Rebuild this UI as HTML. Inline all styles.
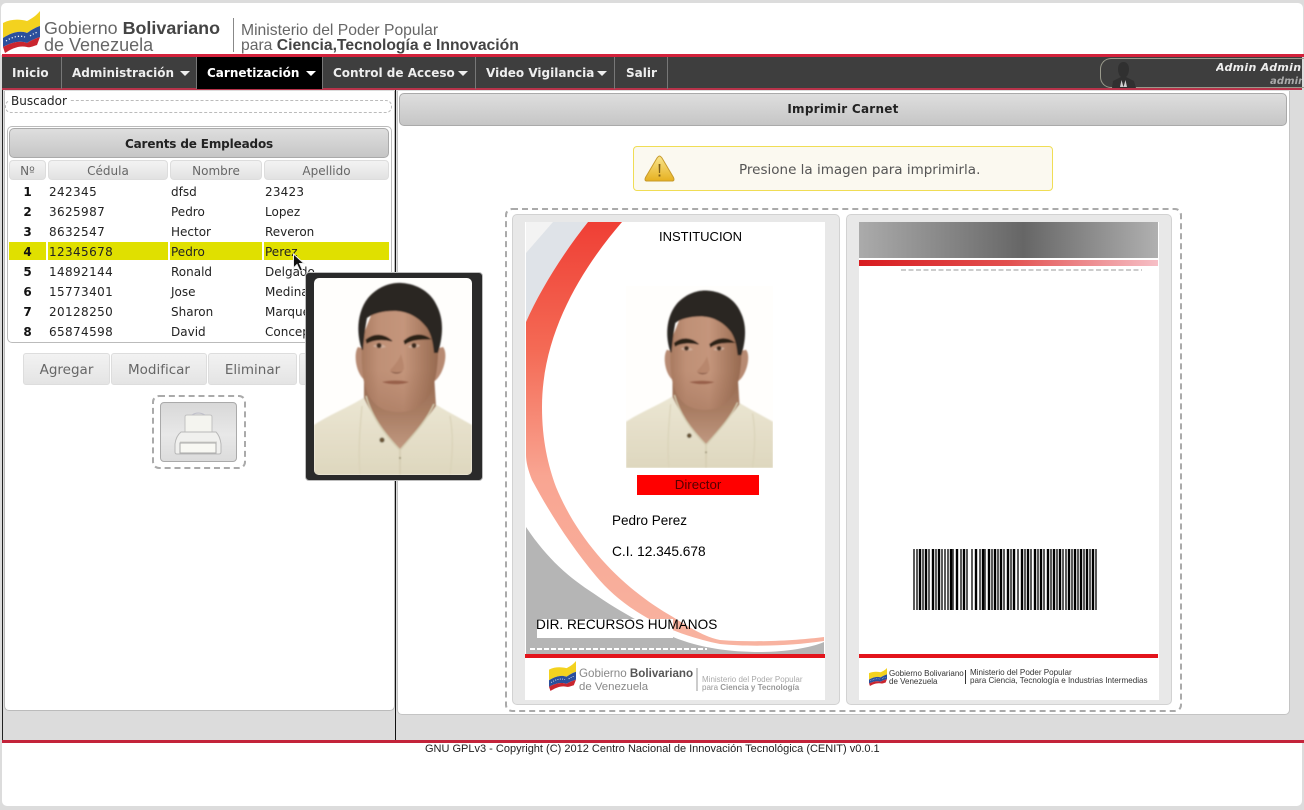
<!DOCTYPE html>
<html lang="es"><head><meta charset="utf-8"><title>Imprimir Carnet</title>
<style>
*{box-sizing:border-box}
html,body{margin:0;padding:0;width:1304px;height:810px;overflow:hidden;background:#dcdcdc}
body{position:relative;font-family:"DejaVu Sans",sans-serif;color:#222}
.a{position:absolute;white-space:nowrap}
.ls{font-family:"Liberation Sans",sans-serif}
.nav{position:absolute;top:57px;height:32px;line-height:32px;color:#eee;font-size:12px;font-weight:bold;text-align:left;border-right:1px solid #777}
.nav i{position:absolute;top:14px;width:0;height:0;border:5px solid transparent;border-top:5px solid #eee;border-bottom:0}
.th{position:absolute;top:160px;height:20px;line-height:21px;text-align:center;font-size:12px;color:#666;border:1px solid #ddd;border-radius:4px;background:linear-gradient(#f3f3f3,#e2e2e2)}
.tr{position:absolute;left:0;width:400px;height:20px;line-height:20px;font-size:12px;color:#222}
.tr span{position:absolute;top:0;white-space:nowrap}
.tr b{position:absolute;left:9px;width:37px;text-align:center;color:#111}
.c1{left:49px;letter-spacing:.38px}.c2{left:171px}.c3{left:265px}
.hl{position:absolute;top:242px;height:18px;background:#e0e000}
.btn{position:absolute;top:353px;height:32px;line-height:32px;text-align:center;font-size:13.5px;color:#666;border:1px solid #ddd;border-radius:3px;background:linear-gradient(#f2f2f2,#e4e4e4)}
.bar{position:absolute;border:1px solid #aaa;border-radius:5px;background:linear-gradient(#dedede,#c6c6c6);font-weight:bold;font-size:12px;color:#222;text-align:center}
</style></head><body>
<svg width="0" height="0" style="position:absolute">
<defs>
<linearGradient id="sk" x1="0" x2="1" y1="0" y2="0"><stop offset="0" stop-color="#a87a60"/><stop offset=".22" stop-color="#bf9076"/><stop offset=".55" stop-color="#c4957b"/><stop offset="1" stop-color="#96694f"/></linearGradient>
<linearGradient id="jaw" x1="0" x2="0" y1="0" y2="1"><stop offset="0" stop-color="#8a5c44" stop-opacity="0"/><stop offset=".6" stop-color="#8a5c44" stop-opacity="0"/><stop offset="1" stop-color="#8a5c44" stop-opacity=".3"/></linearGradient>
<linearGradient id="nk" x1="0" x2="0" y1="0" y2="1"><stop offset="0" stop-color="#946850"/><stop offset=".5" stop-color="#a87c62"/><stop offset="1" stop-color="#c09880"/></linearGradient>
<linearGradient id="shirt" x1="0" x2="0" y1="0" y2="1"><stop offset="0" stop-color="#ebe6d3"/><stop offset="1" stop-color="#ded7be"/></linearGradient>
<filter id="bl"><feGaussianBlur stdDeviation=".9"/></filter>
<linearGradient id="rd" x1="0" x2="0" y1="0" y2="1"><stop offset="0" stop-color="#ef3f35"/><stop offset=".3" stop-color="#f46a55"/><stop offset=".6" stop-color="#f9a592"/><stop offset="1" stop-color="#f8b3a0"/></linearGradient>
<symbol id="face" viewBox="0 0 158 197" preserveAspectRatio="none">
<rect width="158" height="197" fill="#fffefc"/>
<g filter="url(#bl)">
<path d="M0 147 C18 135 38 128 52 118 L118 124 C130 132 146 140 158 147 V197 H0Z" fill="url(#shirt)"/>
<path d="M50 100 L50 120 C60 142 74 158 86 171 C98 158 112 142 122 128 L120 96Z" fill="url(#nk)"/>
<path d="M44 69 C39 76 42 97 52 103 L54 72Z M129 69 C135 76 129 99 119 104 L117 72Z" fill="#b78a72"/>
<path d="M48 60 C47 85 48 104 54 116 C60 128 70 134 85 134 C100 134 110 127 116 116 C122 104 125 85 124 58 L110 30 H60Z" fill="url(#sk)"/>
<path d="M48 60 C47 85 48 104 54 116 C60 128 70 134 85 134 C100 134 110 127 116 116 C122 104 125 85 124 58 L110 30 H60Z" fill="url(#jaw)"/>
<path d="M48 72 C42 55 43 34 54 20 C64 8 78 4 88 5 C103 6 117 14 123 28 C130 42 129 58 124 75 L120 75 C119 66 118 58 113 50 C104 38 92 33 80 33 C68 33 58 36 53 40 C51 50 50 62 49 72Z" fill="#2a2622"/>
<path d="M52 62 C60 55 70 56 78 63 C70 61 60 61 53 65Z M90 63 C98 56 108 55 116 61 C108 61 98 61 91 66Z" fill="#2c2018" stroke="#2c2018" stroke-width="1"/>
<path d="M59 68 C63 65.500 69 65.500 72 69 C68 70.500 63 70.500 59 68Z M94 69 C97 65.500 103 65.500 106 67.500 C103 70.500 98 70.500 94 69Z" fill="#cfae9a"/>
<circle cx="65" cy="67.500" r="2.600" fill="#3c2a1e"/><circle cx="100" cy="67.500" r="2.600" fill="#3c2a1e"/>
<path d="M76 92 C80 96 87 96 90 91 C90 85 88 80 87 76 C85 82 80 88 76 92Z" fill="#ae7c62" opacity=".55"/>
<path d="M76 93 C80 95 86 95 89 93 C85 96.500 80 96.500 76 93Z" fill="#7f5240"/>
<path d="M68 104 C76 102 87 102 95 104 C88 107 76 107 68 104Z" fill="#985f49"/>
<path d="M52 118 C58 140 72 158 86 172 L86 197 M120 126 C112 144 98 158 86 172" fill="none" stroke="#d4ccb0" stroke-width="1.500"/>
<path d="M48 128 C46 150 44 172 46 197 M136 138 C140 160 138 180 136 197" fill="none" stroke="#d9d2b7" stroke-width="1.200"/>
<circle cx="68" cy="162" r="2.600" fill="#6a5638"/><circle cx="86" cy="180" r="1" fill="#8d8668"/>
</g>
</symbol>
<symbol id="flag" viewBox="0 0 37 42" preserveAspectRatio="none">
<path d="M0 12 C8 8 16 8 24 10 C28 8 33 5 37 0 V15 C31 17 27 20 24 22 C16 19 8 22 0 27Z" fill="#f3d21f"/>
<path d="M0 27 C8 22 16 19 24 22 C27 20 31 17 37 15 V26 C31 28 27 30 24 32 C16 29 8 32 0 36Z" fill="#2b4f9c"/>
<path d="M0 36 C8 32 16 29 24 32 C27 30 31 28 37 26 L34 34 C30 35 27 37 24 36 C16 34 8 38 2 42Z" fill="#c9252f"/>
<path d="M3 30 C9 26 16 24 22 26 M27 25 C30 23 32 22 35 21" fill="none" stroke="#fff" stroke-width="1.200" stroke-dasharray="1.200 2"/>
</symbol>
</defs></svg>

<!-- header -->
<div class="a" style="left:1px;top:3px;width:1302px;height:52px;background:#fff;border-radius:5px 5px 0 0"></div>
<svg class="a" style="left:3px;top:11px" width="37" height="42"><use href="#flag" width="37" height="42"/></svg>
<div class="a ls" style="left:44px;top:18px;font-size:17.900px;line-height:21px;color:#666">Gobierno <b style="color:#444">Bolivariano</b></div>
<div class="a ls" style="left:44px;top:36px;font-size:18px;line-height:19px;color:#666">de Venezuela</div>
<div class="a" style="left:233px;top:18px;width:1px;height:34px;background:#888"></div>
<div class="a ls" style="left:241px;top:22px;font-size:15.700px;line-height:18px;color:#666">Ministerio del Poder Popular</div>
<div class="a ls" style="left:241px;top:37px;font-size:15.700px;line-height:18px;color:#666">para <b style="color:#444">Ciencia,Tecnología e Innovación</b></div>

<!-- nav -->
<div class="a" style="left:2px;top:54px;width:1302px;height:3px;background:#d3213b"></div>
<div class="a" style="left:2px;top:57px;width:1300px;height:32px;background:#3e3e3e"></div>
<div class="a" style="left:2px;top:88px;width:1300px;height:2px;background:#b8334a"></div>
<div class="nav" style="left:2px;width:60px;padding-left:10px">Inicio</div>
<div class="nav" style="left:62px;width:135px;padding-left:10px">Administración<i style="left:118px"></i></div>
<div class="nav" style="left:197px;width:126px;padding-left:10px;background:#000;color:#fff">Carnetización<i style="left:109px;border-top-color:#fff"></i></div>
<div class="nav" style="left:323px;width:153px;padding-left:10px">Control de Acceso<i style="left:135px"></i></div>
<div class="nav" style="left:476px;width:139px;padding-left:10px">Video Vigilancia<i style="left:121px"></i></div>
<div class="nav" style="left:615px;width:53px;padding-left:11px">Salir</div>
<div class="a" style="left:1100px;top:58px;width:204px;height:30px;border:1px solid #9a9a8c;border-right:0;border-radius:11px 0 0 11px"></div>
<svg class="a" style="left:1110px;top:60px" width="28" height="28"><path d="M13.500 2 C17 2 19 5 19 9 C19 13 17.500 16 16 17 L24 21 L26 28 H2 L3 21 L11 17 C9.500 16 8 13 8 9 C8 5 10 2 13.500 2Z" fill="#303030"/><path d="M11.500 20 L13.500 27 L15.500 20 L17 27 H10Z" fill="#cfcfcf"/></svg>
<div class="a" style="left:1216px;top:61px;width:86px;overflow:hidden;font-size:11px;line-height:14px;font-weight:bold;font-style:italic;color:#eee;letter-spacing:.3px">Admin Admin</div>
<div class="a" style="left:1270px;top:75px;width:32px;overflow:hidden;font-size:10px;line-height:14px;font-weight:bold;font-style:italic;color:#aaa;letter-spacing:.1px">admin</div>

<!-- divider lines -->
<div class="a" style="left:2px;top:90px;width:1px;height:652px;background:#222"></div>
<div class="a" style="left:395px;top:90px;width:1px;height:652px;background:#111"></div>

<!-- left panel -->
<div class="a" style="left:4px;top:91px;width:391px;height:620px;background:#fff;border:1px solid #bbb;border-top:0;border-radius:0 0 5px 5px"></div>
<div class="a" style="left:5px;top:100px;width:387px;height:13px;border:1px dashed #bbb;border-radius:6px"></div>
<div class="a" style="left:9px;top:94px;padding:0 2px;background:#fff;font-size:12px;line-height:15px">Buscador</div>

<div class="a" style="left:7px;top:126px;width:385px;height:217px;border:1px solid #bbb;border-radius:5px"></div>
<div class="bar" style="left:9px;top:128px;width:380px;height:30px;line-height:31px;letter-spacing:-.15px">Carents de Empleados</div>
<div class="th" style="left:9px;width:37px">Nº</div>
<div class="th" style="left:48px;width:120px">Cédula</div>
<div class="th" style="left:170px;width:92px">Nombre</div>
<div class="th" style="left:264px;width:125px">Apellido</div>
<div class="hl" style="left:9px;width:37px"></div>
<div class="hl" style="left:48px;width:120px"></div>
<div class="hl" style="left:170px;width:92px"></div>
<div class="hl" style="left:264px;width:125px"></div>
<div class="tr" style="top:182px"><b>1</b><span class="c1">242345</span><span class="c2">dfsd</span><span class="c3" style="letter-spacing:.2px">23423</span></div>
<div class="tr" style="top:202px"><b>2</b><span class="c1">3625987</span><span class="c2">Pedro</span><span class="c3">Lopez</span></div>
<div class="tr" style="top:222px"><b>3</b><span class="c1">8632547</span><span class="c2">Hector</span><span class="c3">Reveron</span></div>
<div class="tr" style="top:242px"><b>4</b><span class="c1">12345678</span><span class="c2">Pedro</span><span class="c3">Perez</span></div>
<div class="tr" style="top:262px"><b>5</b><span class="c1">14892144</span><span class="c2">Ronald</span><span class="c3">Delgado</span></div>
<div class="tr" style="top:282px"><b>6</b><span class="c1">15773401</span><span class="c2">Jose</span><span class="c3">Medina</span></div>
<div class="tr" style="top:302px"><b>7</b><span class="c1">20128250</span><span class="c2">Sharon</span><span class="c3">Marquez</span></div>
<div class="tr" style="top:322px"><b>8</b><span class="c1">65874598</span><span class="c2">David</span><span class="c3">Concepcion</span></div>
<div class="btn" style="left:23px;width:87px">Agregar</div>
<div class="btn" style="left:111px;width:96px">Modificar</div>
<div class="btn" style="left:208px;width:89px">Eliminar</div>
<div class="btn" style="left:299px;width:30px"></div>
<div class="a" style="left:152px;top:395px;width:94px;height:74px;border:2px dashed #aaa;border-radius:7px"></div>
<div class="a" style="left:160px;top:402px;width:77px;height:60px;border:1px solid #aaa;border-radius:4px;background:linear-gradient(#d8d8d8,#e8e8e8 55%,#dcdcdc)"></div>
<svg class="a" style="left:174px;top:410px" width="50" height="46">
<path d="M11 26 V7 Q11 5 13 5 H36 Q38 5 38 7 V26Z" fill="#f4f4ef" stroke="#c2c2c2"/>
<path d="M18 5 Q24 1 31 5" fill="none" stroke="#c0c0ca"/>
<path d="M7 22 H42 Q46 26 47 34 V42 Q47 44 45 44 H3 Q1 44 1 42 V34 Q2 26 7 22Z" fill="#f0f0ee" stroke="#b8b8b8"/>
<path d="M6 32 H43" stroke="#cfcfcb"/>
<rect x="6" y="33" width="36" height="10" fill="#f8f8f3" stroke="#aaa"/>
</svg>

<!-- right panel -->
<div class="a" style="left:397px;top:91px;width:893px;height:624px;background:#fff;border:1px solid #c4c4c4;border-top:0;border-radius:0 0 5px 5px"></div>
<div class="bar" style="left:399px;top:93px;width:888px;height:33px;line-height:31px;letter-spacing:.25px">Imprimir Carnet</div>
<div class="a" style="left:633px;top:146px;width:420px;height:45px;border:1px solid #f0dd55;border-radius:4px;background:#fbf9f0;font-size:13.500px;color:#555"><span style="position:absolute;left:105px;top:1px;line-height:45px">Presione la imagen para imprimirla.</span></div>
<svg class="a" style="left:644px;top:154px" width="31" height="29">
<defs><linearGradient id="wg" x1="0" x2="0" y1="0" y2="1"><stop offset="0" stop-color="#f9e58d"/><stop offset="1" stop-color="#e6b020"/></linearGradient></defs>
<path d="M15.500 2 C16.500 2 17 3 18 4 L29.500 23.500 Q31 27 28 27 H3 Q0 27 1.500 23.500 L13 4 C14 3 14.500 2 15.500 2Z" fill="url(#wg)" stroke="#c79a2c"/>
<path d="M14.600 10 H16.400 L16.100 19 H14.900Z M14.600 20.500 H16.400 V22.500 H14.600Z" fill="#7a5b16"/>
</svg>

<div class="a" style="left:505px;top:208px;width:677px;height:504px;border:2px dashed #aaa;border-radius:7px"></div>
<div class="a" style="left:512px;top:214px;width:328px;height:491px;background:#e8e8e8;border:1px solid #d2d2d2;border-radius:5px"></div>
<div class="a" style="left:846px;top:214px;width:326px;height:491px;background:#e8e8e8;border:1px solid #d2d2d2;border-radius:5px"></div>

<!-- front card -->
<svg class="a" style="left:525px;top:222px" width="300" height="478" viewBox="525 222 300 478">
<rect x="525" y="222" width="300" height="478" fill="#fff"/>
<path d="M526 222 H588 C564 252 540 290 526 322Z" fill="#dfe3e8"/>
<path d="M526 222 H553 L526 253Z" fill="#f3f3f3"/>
<path d="M588 222 H622 C585 265 542 330 542 407 C542 440 548 465 556 487 C580 545 625 590 673 617 C690 628 705 637 720 640 C760 643 800 640 824 637 V641 C790 646 750 647 720 644 C660 632 620 605 596 576 C570 545 548 510 532 480 C528 470 526 462 526 455 V322 C540 290 564 252 588 222Z" fill="url(#rd)"/>
<path d="M526 527 C548 560 570 578 593 593 C620 612 650 628 673 637 C700 648 730 652 760 652 C785 652 810 648 824 642 V656 H526Z" fill="#b5b5b5"/>
<rect x="537" y="619" width="136" height="19" fill="#fff"/>
<path d="M530 649 H707" stroke="#fff" stroke-width="2" stroke-dasharray="5 2"/>
<rect x="525" y="654" width="300" height="4" fill="#e3141c"/>
<rect x="525" y="658" width="300" height="42" fill="#fff"/>
<svg x="549" y="661" width="27" height="30"><use href="#flag" width="27" height="30"/></svg>
<path d="M697 668 V691" stroke="#999"/>
<text x="579" y="677" font-family="Liberation Sans" font-size="11.600" fill="#888">Gobierno <tspan font-weight="bold" fill="#555">Bolivariano</tspan></text>
<text x="579" y="690" font-family="Liberation Sans" font-size="11.400" fill="#888">de Venezuela</text>
<text x="702" y="682" font-family="Liberation Sans" font-size="8" fill="#aaa">Ministerio del Poder Popular</text>
<text x="702" y="690" font-family="Liberation Sans" font-size="8" fill="#999">para <tspan font-weight="bold">Ciencia y Tecnología</tspan></text>
</svg>
<div class="a ls" style="left:659px;top:229px;font-size:13px;line-height:15px;color:#000">INSTITUCION</div>
<svg class="a" style="left:626px;top:286px" width="147" height="182"><use href="#face" width="147" height="182"/></svg>
<div class="a ls" style="left:637px;top:475px;width:122px;height:20px;line-height:20px;background:#ff0000;text-align:center;font-size:13.300px;color:#500">Director</div>
<div class="a ls" style="left:612px;top:513px;font-size:13.500px;line-height:16px;color:#000">Pedro Perez</div>
<div class="a ls" style="left:612px;top:544px;font-size:13.700px;line-height:16px;color:#000">C.I. 12.345.678</div>
<div class="a ls" style="left:536px;top:617px;font-size:13.600px;line-height:16px;color:#000">DIR. RECURSOS HUMANOS</div>

<!-- back card -->
<svg class="a" style="left:859px;top:222px" width="300" height="478" viewBox="859 222 300 478">
<defs>
<linearGradient id="g1" x1="0" x2="1" y1="0" y2="0"><stop offset="0" stop-color="#ababab"/><stop offset=".55" stop-color="#666"/><stop offset="1" stop-color="#b0b0b0"/></linearGradient>
<linearGradient id="g2" x1="0" x2="1" y1="0" y2="0"><stop offset="0" stop-color="#d81c20"/><stop offset=".5" stop-color="#e2504f"/><stop offset="1" stop-color="#f6bfc6"/></linearGradient>
</defs>
<rect x="859" y="222" width="300" height="478" fill="#fff"/>
<rect x="859" y="222" width="299" height="36" fill="url(#g1)"/>
<rect x="859" y="260" width="299" height="6" fill="url(#g2)"/>
<path d="M901 270 H1142" stroke="#bbb" stroke-width="1.500" stroke-dasharray="5 2.500"/>
<path fill="none" stroke="#000" stroke-width="1.300" d="M914 549v61M917 549v61M923 549v61M929 549v61M936 549v61M942 549v61M945 549v61M948 549v61M953 549v61M961 549v61M967 549v61M972 549v61M980 549v61M985 549v61M992 549v61M998 549v61M1004 549v61M1011 549v61M1018 549v61M1025 549v61M1031 549v61M1038 549v61M1044 549v61M1051 549v61M1057 549v61M1063 549v61M1066 549v61M1072 549v61M1078 549v61M1084 549v61M1090 549v61M1096 549v61"/>
<path fill="none" stroke="#000" stroke-width="2.400" d="M920 549v61M926 549v61M933 549v61M939 549v61M951 549v61M957 549v61M964 549v61M976 549v61M983 549v61M989 549v61M995 549v61M1001 549v61M1008 549v61M1014 549v61M1022 549v61M1028 549v61M1035 549v61M1041 549v61M1048 549v61M1054 549v61M1060 549v61M1069 549v61M1075 549v61M1081 549v61M1087 549v61M1093 549v61"/>
<rect x="859" y="654" width="299" height="4" fill="#e3141c"/>
<svg x="869" y="668" width="18" height="18"><use href="#flag" width="18" height="18"/></svg>
<path d="M965.500 670 V684" stroke="#333"/>
<text x="889" y="676" font-family="Liberation Sans" font-size="8" fill="#333">Gobierno Bolivariano</text>
<text x="889" y="684" font-family="Liberation Sans" font-size="8" fill="#333">de Venezuela</text>
<text x="970" y="675" font-family="Liberation Sans" font-size="8.100" fill="#333">Ministerio del Poder Popular</text>
<text x="970" y="683" font-family="Liberation Sans" font-size="8.100" fill="#333">para Ciencia, Tecnología e Industrias Intermedias</text>
</svg>

<!-- popup -->
<div class="a" style="left:305px;top:272px;width:178px;height:209px;background:#2a2a2a;border:1px solid #bdbdbd;border-radius:4px"></div>
<svg class="a" style="left:314px;top:278px;border-radius:5px" width="158" height="197"><use href="#face" width="158" height="197"/></svg>
<svg class="a" style="left:292px;top:253px" width="20" height="22"><path d="M1.500 1 V15 L5 11.500 L8 18 L10.500 17 L7.500 10.500 H12Z" fill="#111" stroke="#eee"/></svg>

<!-- footer -->
<div class="a" style="left:2px;top:740px;width:1302px;height:3px;background:#c3233a"></div>
<div class="a" style="left:2px;top:743px;width:1300px;height:63px;background:#fff;border-radius:0 0 5px 5px"></div>
<div class="a ls" style="left:425px;top:743px;font-size:11px;line-height:13px;color:#222">GNU GPLv3 - Copyright (C) 2012 Centro Nacional de Innovación Tecnológica (CENIT) v0.0.1</div>
</body></html>
